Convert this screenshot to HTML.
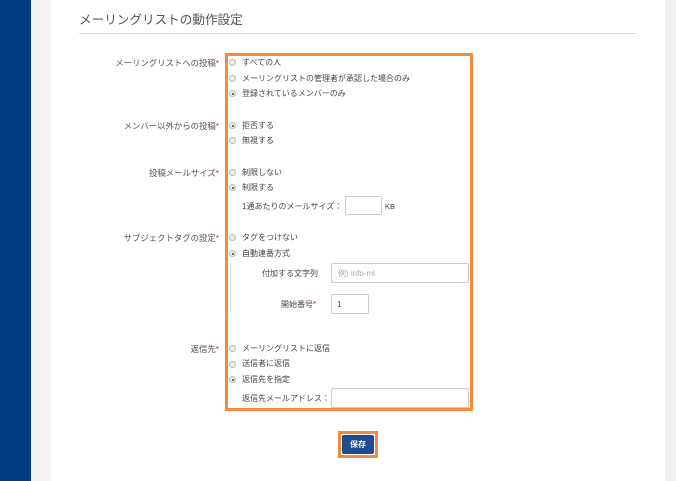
<!DOCTYPE html>
<html><head><meta charset="utf-8"><style>
*{margin:0;padding:0;box-sizing:border-box}
body{width:676px;height:481px;position:relative;overflow:hidden;background:#fff;font-family:"Liberation Sans","Noto Sans CJK JP",sans-serif;font-size:8px;color:#444}
.a{position:absolute;white-space:nowrap;line-height:10px;margin-top:1px}
.l{position:absolute;right:457px;white-space:nowrap;line-height:10px;color:#555;font-size:8.4px;margin-top:1px}
.l b,.r b{color:#d22;font-weight:normal}
.rd{position:absolute;width:7px;height:7px;border-radius:50%;border:1px solid #bbb;background:#eee;left:229px}
.rd.on::after{content:"";position:absolute;left:1.5px;top:1.5px;width:2px;height:2px;border-radius:50%;background:#444}
.in{position:absolute;border:1px solid #ccc;border-radius:2px;background:#fff}
</style></head><body>
<div style="position:absolute;left:0;top:0;width:31px;height:481px;background:#003c82"></div>
<div style="position:absolute;left:31px;top:0;width:20px;height:481px;background:#f3f3f3"></div>
<div style="position:absolute;left:665px;top:0;width:11px;height:481px;background:#f0f0f0"></div>
<div class="a" style="left:79px;top:11px;font-size:12.6px;line-height:16px;color:#555">メーリングリストの動作設定</div>
<div style="position:absolute;left:79px;top:33px;width:558px;height:1px;background:#ddd"></div>
<div style="position:absolute;left:225px;top:53px;width:248px;height:358px;border:3px solid #f5893c"></div>

<div class="l" style="top:57px">メーリングリストへの投稿<b>*</b></div>
<div class="rd" style="top:59px"></div><div class="a" style="left:242px;top:57px">すべての人</div>
<div class="rd" style="top:75px"></div><div class="a" style="left:242px;top:73px">メーリングリストの管理者が承認した場合のみ</div>
<div class="rd on" style="top:90px"></div><div class="a" style="left:242px;top:88px">登録されているメンバーのみ</div>

<div class="l" style="top:120px">メンバー以外からの投稿<b>*</b></div>
<div class="rd on" style="top:122px"></div><div class="a" style="left:242px;top:120px">拒否する</div>
<div class="rd" style="top:137px"></div><div class="a" style="left:242px;top:135px">無視する</div>

<div class="l" style="top:167px">投稿メールサイズ<b>*</b></div>
<div class="rd" style="top:169px"></div><div class="a" style="left:242px;top:167px">制限しない</div>
<div class="rd on" style="top:184px"></div><div class="a" style="left:242px;top:182px">制限する</div>
<div class="a" style="left:242px;top:201px">1通あたりのメールサイズ：</div>
<div class="in" style="left:345px;top:196px;width:37px;height:19px"></div>
<div class="a" style="left:385px;top:201px;font-size:7.5px">KB</div>

<div class="l" style="top:232px">サブジェクトタグの設定<b>*</b></div>
<div class="rd" style="top:234px"></div><div class="a" style="left:242px;top:232px">タグをつけない</div>
<div class="rd on" style="top:250px"></div><div class="a" style="left:242px;top:248px">自動連番方式</div>
<div style="position:absolute;left:230px;top:263px;width:1px;height:50px;background:#ddd"></div>
<div class="a" style="left:262px;top:268px">付加する文字列</div>
<div class="in" style="left:331px;top:263px;width:138px;height:20px"><span class="a" style="left:6px;top:4px;color:#aaa">例) info-ml</span></div>
<div class="a" style="left:281px;top:299px">開始番号<b style="color:#d22;font-weight:normal">*</b></div>
<div class="in" style="left:331px;top:294px;width:38px;height:20px"><span class="a" style="left:5px;top:4px;color:#444">1</span></div>

<div class="l" style="top:343px">返信先<b>*</b></div>
<div class="rd" style="top:345px"></div><div class="a" style="left:242px;top:343px">メーリングリストに返信</div>
<div class="rd" style="top:361px"></div><div class="a" style="left:242px;top:358px">送信者に返信</div>
<div class="rd on" style="top:376px"></div><div class="a" style="left:242px;top:374px">返信先を指定</div>
<div class="a" style="left:242px;top:393px">返信先メールアドレス：</div>
<div class="in" style="left:331px;top:388px;width:138px;height:20px"></div>

<div style="position:absolute;left:338px;top:431px;width:40px;height:27px;background:#f5893c"></div>
<div style="position:absolute;left:341px;top:434px;width:34px;height:21px;background:#fff"></div>
<div style="position:absolute;left:342px;top:435px;width:32px;height:19px;background:#1d4b8c;border-radius:2px;color:#fff;font-size:8px;font-weight:bold;text-align:center;line-height:19px">保存</div>
</body></html>
